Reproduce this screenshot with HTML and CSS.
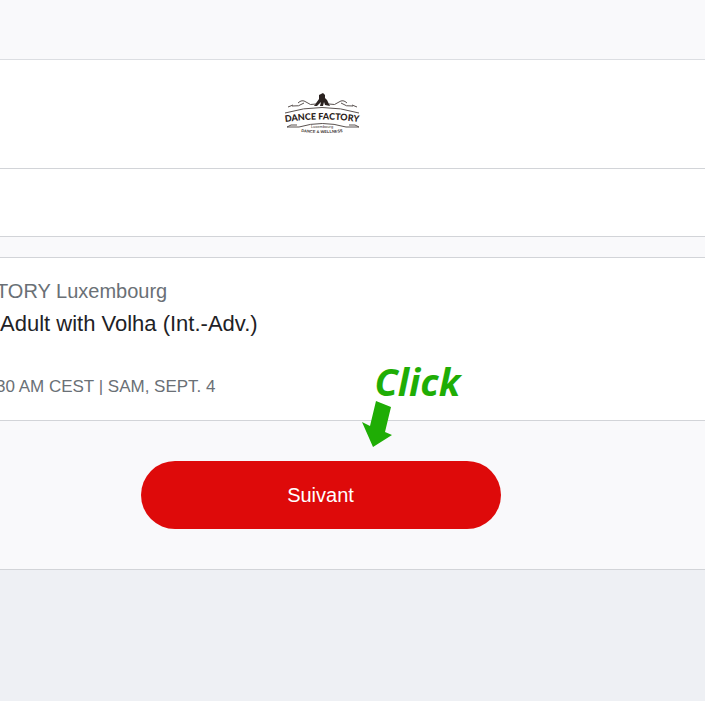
FILE: index.html
```
<!DOCTYPE html>
<html lang="fr">
<head>
    <meta charset="UTF-8">
    <meta name="viewport" content="width=device-width, initial-scale=1.0">
    <title>Dance Factory Luxembourg</title>
    <link rel="stylesheet" href="styles.css">
</head>
<body>
    <header class="brand">
        <svg class="logo" width="100" height="55" viewBox="0 0 100 55" role="img" aria-label="Dance Factory Luxembourg">
            <defs>
                <path id="arcTop" d="M8 38 Q51 31 94 38"/>
                <path id="arcBottom" d="M20 46 Q51 50 82 46"/>
            </defs>
            <!-- dancers -->
            <path class="ink" d="M50 9 L52 8 L54 10 L54 13 L56 15 L59 21 L54 20 L53 17 L52 21 L49 21 L50 17 L46 21 L43 21 L48 14 L48 10 Z"/>
            <!-- scrolls -->
            <path class="line" d="M27 18 Q31 14 35 17 Q39 21 45 19 M21 21 Q28 22 33 18 M17 22 L22 20 M76 18 Q72 14 68 17 Q64 21 58 19 M82 21 Q75 22 70 18 M81 20 L86 22"/>
            <path class="line" d="M14 28 Q51 17 88 28"/>
            <text class="logo-name" text-anchor="middle"><textPath href="#arcTop" startOffset="50%">DANCE FACTORY</textPath></text>
            <!-- ribbon -->
            <path class="line" d="M28 42 Q51 35 75 42 M28 42 L16 42 L20 40 L26 40 M75 42 L88 42 L84 40 L78 40"/>
            <text class="logo-small" x="51" y="43" text-anchor="middle">Luxembourg</text>
            <text class="logo-small bold" text-anchor="middle"><textPath href="#arcBottom" startOffset="50%">DANCE &amp; WELLNESS</textPath></text>
        </svg>
    </header>
    <div class="bar"></div>

    <main>
        <section class="card">
            <p class="place">TORY Luxembourg</p>
            <h1>Adult with Volha (Int.-Adv.)</h1>
            <p class="time">30 AM CEST | SAM, SEPT. 4</p>
        </section>
        <div class="actions">
            <button type="button" class="next">Suivant</button>
            <div class="hint">
                <span>Click</span>
                <svg class="arrow" width="32" height="48" viewBox="0 0 32 48" aria-hidden="true">
                    <path d="M15 0 L30 6 L24 31 L31 34 L12 46 L1 21 L9 25 Z"/>
                </svg>
            </div>
        </div>
    </main>
</body>
</html>
```

FILE: styles.css
```
* {
    box-sizing: border-box;
}
body {
    margin: 0;
    padding-top: 59px;
    background-color: #eef0f4;
    background-image: linear-gradient(#f9f9fb, #f9f9fb);
    background-size: 100% 59px;
    background-repeat: no-repeat;
    font-family: Arial, "Liberation Sans", sans-serif;
    color: #1e2226;
    overflow-x: hidden;
}
.brand {
    display: flex;
    justify-content: center;
    padding: 25px 64px 28px 0;
    background: white;
    border-top: 1px solid #dcdee2;
    border-bottom: 1px solid #d2d4d8;
}
.logo {
    display: block;
}
.ink {
    fill: #2b2220;
}
.line {
    fill: none;
    stroke: #5a5250;
    stroke-width: 1;
}
.logo-name {
    font-family: Lato, sans-serif;
    font-weight: 900;
    font-size: 9px;
    fill: #2b2220;
}
.logo-small {
    font-size: 4px;
    fill: #3b3230;
}
.bold {
    font-weight: bold;
}
.bar {
    height: 68px;
    background: white;
    border-bottom: 1px solid #d2d4d8;
}
main {
    padding-top: 20px;
    background: #f9f9fb;
    border-bottom: 1px solid #d2d4d8;
}
.card {
    padding: 19px 0 20px;
    background: white;
    border-top: 1px solid #d2d4d8;
    border-bottom: 1px solid #d2d4d8;
}
.card p,
.card h1 {
    margin: 0;
    white-space: nowrap;
}
.card .place {
    margin-left: -4px;
    font-size: 20px;
    line-height: 28px;
    color: #6a7076;
}
.card h1 {
    font-size: 22px;
    font-weight: normal;
    line-height: 38px;
}
.card .time {
    margin-top: 31px;
    margin-left: -4px;
    font-size: 17px;
    line-height: 26px;
    color: #6a7076;
}
.actions {
    position: relative;
    display: flex;
    justify-content: center;
    padding: 40px 64px 40px 0;
}
.next {
    width: 360px;
    height: 68px;
    border: none;
    border-radius: 34px;
    background-color: #de0a0a;
    color: white;
    font-family: inherit;
    font-size: 20px;
    cursor: pointer;
}
/* pointer over the card edge */
.hint {
    position: absolute;
    top: -60px;
    left: calc(50% + 8px);
    color: #1fad05;
    font-family: "Open Sans", sans-serif;
    font-size: 38px;
    font-weight: bold;
    font-style: italic;
    line-height: 40px;
}
.hint span {
    display: block;
    padding-left: 14px;
}
.arrow {
    display: block;
    fill: #1fad05;
}
```
